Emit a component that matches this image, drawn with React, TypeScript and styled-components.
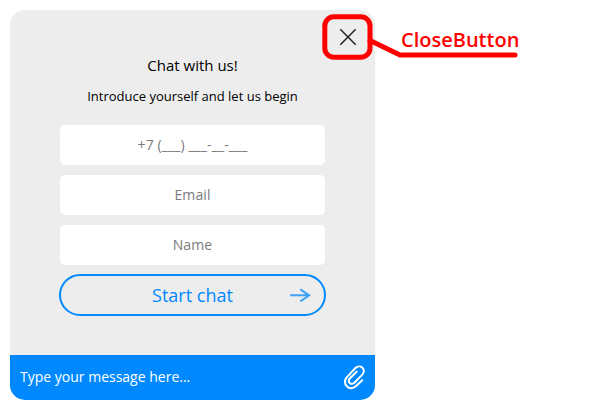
import React from 'react';
import styled, { createGlobalStyle } from 'styled-components';

const GlobalStyle = createGlobalStyle`
  * { box-sizing: border-box; }
  body { margin: 0; background: #fff; font-family: "Open Sans", sans-serif; }
`;
const Page = styled.main`
  position: relative;
  width: 600px;
  height: 410px;
  padding: 10px;
`;
const Chat = styled.section`
  width: 365px;
  height: 390px;
  display: flex;
  flex-direction: column;
  background: #ededed;
  border-radius: 15px;
  overflow: hidden;
`;
const Header = styled.header`
  height: 44px;
  display: flex;
  justify-content: flex-end;
  padding: 18px 18px 0 0;
`;
const CloseButton = styled.button`
  width: 18px;
  height: 18px;
  padding: 0;
  border: 0;
  background: none;
  svg { display: block; }
`;
const Title = styled.h1`
  margin: 0;
  font-size: 15px;
  line-height: 22px;
  font-weight: 400;
  text-align: center;
  color: #000;
`;
const Subtitle = styled.p`
  margin: 10px 0 19px;
  font-size: 13px;
  line-height: 20px;
  text-align: center;
  color: #000;
`;
const Form = styled.form`
  flex: 1;
  display: flex;
  flex-direction: column;
  gap: 10px;
  padding: 0 50px;
`;
const Field = styled.input`
  width: 265px;
  height: 40px;
  padding: 0 0 2px;
  border: 0;
  border-radius: 5px;
  background: #fff;
  font: 14px "Open Sans", sans-serif;
  letter-spacing: 0.1px;
  text-align: center;
  &::placeholder { color: #7b7b7b; opacity: 1; }
`;
const StartButton = styled.button`
  display: grid;
  grid-template-columns: 1fr 22px;
  align-items: center;
  width: 267px;
  height: 42px;
  margin: -1px 0 0 -1px;
  padding: 0 13px 0 35px;
  border: 2px solid #0089ff;
  border-radius: 21px;
  background: transparent;
  color: #0089ff;
  font: 18px "Open Sans", sans-serif;
`;
const MessageBar = styled.footer`
  height: 45px;
  display: flex;
  align-items: center;
  justify-content: space-between;
  padding: 0 9px 0 10px;
  background: #0089ff;
  color: #fff;
  font-size: 14px;
  span { padding-bottom: 2px; }
  svg { margin-bottom: 2px; }
`;
const Callout = styled.div`
  position: absolute;
  left: 320px;
  top: 10px;
  width: 205px;
  height: 55px;
  pointer-events: none;
  svg { display: block; }
`;
const CalloutLabel = styled.span`
  position: absolute;
  left: 81px;
  top: 16px;
  color: #f00;
  font-size: 20px;
  line-height: 28px;
  font-weight: 600;
`;

export default function App() {
  return (
    <Page>
      <GlobalStyle />
      <Chat>
        <Header>
          <CloseButton aria-label="Close">
            <svg width="18" height="18" stroke="#222" strokeWidth="1.5">
              <path d="M1.3 1.3 16.7 16.7M16.7 1.3 1.3 16.7" />
            </svg>
          </CloseButton>
        </Header>
        <Title>Chat with us!</Title>
        <Subtitle>Introduce yourself and let us begin</Subtitle>
        <Form>
          <Field placeholder="+7 (___) ___-__-___" />
          <Field placeholder="Email" />
          <Field placeholder="Name" />
          <StartButton type="button">
            Start chat
            <svg width="22" height="14" fill="none" stroke="#3fa0f8" strokeWidth="2" strokeLinecap="round">
              <path d="M2 7.3H20.3M12 1.8 20.3 7.3 12 12.8" />
            </svg>
          </StartButton>
        </Form>
        <MessageBar>
          <span>Type your message here...</span>
          <svg width="24" height="26" viewBox="0 0 24 26" fill="none" stroke="#fff" strokeWidth="2" strokeLinecap="round" strokeLinejoin="round">
            <path d="M20.2 16.3 13.8 22.3C7.6 27.6-.1 20.4 4.5 13.6L13.2 4.3C18-.8 24.8 5.4 20.3 10.6L12.4 18.7C8.8 21.6 5 17.8 7.8 14.5L14.6 7.7" />
          </svg>
        </MessageBar>
      </Chat>
      <Callout>
        <svg width="205" height="55" fill="none" stroke="#f00" strokeWidth="5" strokeLinecap="round" strokeLinejoin="round">
          <rect x="4.8" y="6.8" width="45.2" height="40.4" rx="9" />
          <path d="M50 30.5 80 45H195" />
        </svg>
        <CalloutLabel>CloseButton</CalloutLabel>
      </Callout>
    </Page>
  );
}
